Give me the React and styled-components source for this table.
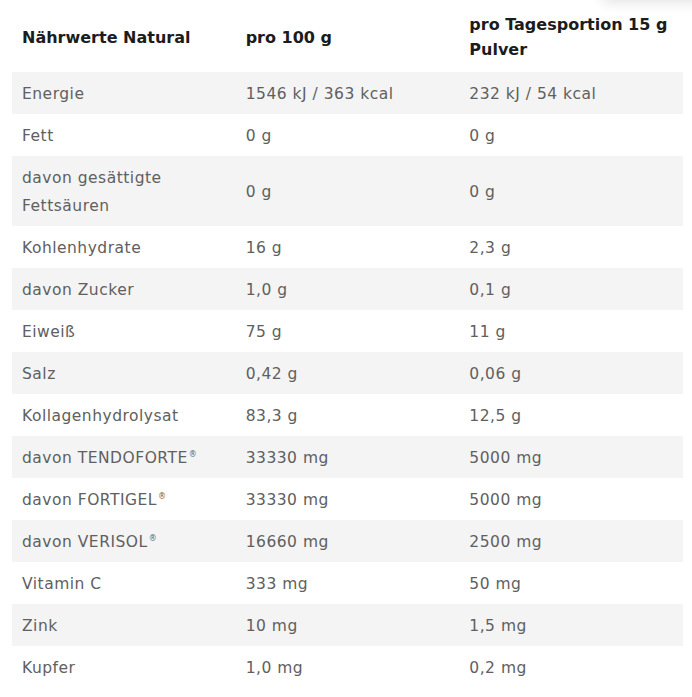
import React from "react";
import styled, { createGlobalStyle } from "styled-components";

const Global = createGlobalStyle`
  html, body {
    margin: 0;
    padding: 0;
    background: #ffffff;
  }
  body {
    font-family: "DejaVu Sans", "Noto Sans", sans-serif;
  }
`;

const Page = styled.div`
  position: relative;
  width: 692px;
  height: 697px;
  overflow: hidden;
  background: #ffffff;
`;

const CornerShadow = styled.div`
  position: absolute;
  top: -60px;
  right: -20px;
  width: 110px;
  height: 60px;
  background: #ffffff;
  border-radius: 6px;
  box-shadow: 0 2px 14px rgba(0, 0, 0, 0.12);
`;

const Table = styled.table`
  margin-left: 12px;
  width: 671px;
  border-collapse: collapse;
  table-layout: fixed;
`;

const HeadCell = styled.th`
  text-align: left;
  vertical-align: middle;
  padding: 12px 10px 10px;
  height: 50px;
  font-family: "DejaVu Sans", "Noto Sans", sans-serif;
  font-weight: 700;
  font-size: 16px;
  line-height: 25px;
  color: #1c1c1c;
  white-space: nowrap;
`;

const Row = styled.tr`
  background: ${(p) => (p.$striped ? "#f4f4f4" : "#ffffff")};
`;

const Cell = styled.td`
  padding: 8px 10px 6px;
  vertical-align: middle;
  font-size: 15.5px;
  line-height: 28px;
  letter-spacing: 0.5px;
  color: #606060;
  white-space: nowrap;
`;

const Reg = styled.sup`
  font-size: 8px;
  vertical-align: 6px;
  line-height: 0;
  margin-left: 1px;
`;

const rows = [
  ["Energie", "1546 kJ / 363 kcal", "232 kJ / 54 kcal"],
  ["Fett", "0 g", "0 g"],
  [
    <>
      davon gesättigte
      <br />
      Fettsäuren
    </>,
    "0 g",
    "0 g",
  ],
  ["Kohlenhydrate", "16 g", "2,3 g"],
  ["davon Zucker", "1,0 g", "0,1 g"],
  ["Eiweiß", "75 g", "11 g"],
  ["Salz", "0,42 g", "0,06 g"],
  ["Kollagenhydrolysat", "83,3 g", "12,5 g"],
  [
    <>
      davon TENDOFORTE<Reg>®</Reg>
    </>,
    "33330 mg",
    "5000 mg",
  ],
  [
    <>
      davon FORTIGEL<Reg>®</Reg>
    </>,
    "33330 mg",
    "5000 mg",
  ],
  [
    <>
      davon VERISOL<Reg>®</Reg>
    </>,
    "16660 mg",
    "2500 mg",
  ],
  ["Vitamin C", "333 mg", "50 mg"],
  ["Zink", "10 mg", "1,5 mg"],
  ["Kupfer", "1,0 mg", "0,2 mg"],
];

export default function App() {
  return (
    <Page>
      <Global />
      <CornerShadow />
      <Table>
        <thead>
          <tr>
            <HeadCell>Nährwerte Natural</HeadCell>
            <HeadCell>pro 100 g</HeadCell>
            <HeadCell>
              pro Tagesportion 15 g
              <br />
              Pulver
            </HeadCell>
          </tr>
        </thead>
        <tbody>
          {rows.map((r, i) => (
            <Row key={i} $striped={i % 2 === 0}>
              <Cell>{r[0]}</Cell>
              <Cell>{r[1]}</Cell>
              <Cell>{r[2]}</Cell>
            </Row>
          ))}
        </tbody>
      </Table>
    </Page>
  );
}
